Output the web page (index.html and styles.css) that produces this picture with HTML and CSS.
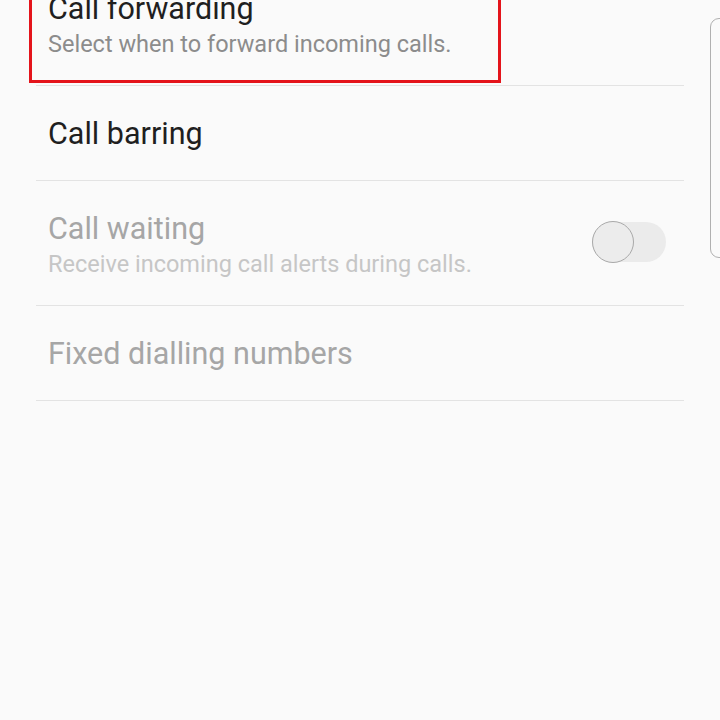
FILE: index.html
```html
<!DOCTYPE html>
<html lang="en">
<head>
  <meta charset="UTF-8" />
  <meta name="viewport" content="width=device-width, initial-scale=1" />
  <title>Call settings</title>
  <link rel="stylesheet" href="styles.css">
</head>
<body>

  <div class="list">
    <div class="row row--sub">
      <div class="text">
        <div class="title">Call forwarding</div>
        <div class="sub">Select when to forward incoming calls.</div>
      </div>
      <div class="highlight"></div>
    </div>

    <div class="row">
      <div class="text">
        <div class="title">Call barring</div>
      </div>
    </div>

    <div class="row row--sub disabled">
      <div class="text">
        <div class="title">Call waiting</div>
        <div class="sub">Receive incoming call alerts during calls.</div>
      </div>
      <div class="switch"><span class="thumb"></span></div>
    </div>

    <div class="row disabled">
      <div class="text">
        <div class="title">Fixed dialling numbers</div>
      </div>
    </div>
  </div>

  <div class="edge-panel"></div>

</body>
</html>
```

FILE: styles.css
```css
* {
  box-sizing: border-box;
}
html, body {
  margin: 0;
  padding: 0;
  height: 100%;
  background: #fafafa;
  font-family: Roboto, 'Noto Sans', sans-serif;
  overflow: hidden;
  position: relative;
}

.list {
  margin-top: -39px;
}

.row {
  position: relative;
  display: flex;
  align-items: center;
  margin: 0 36px;
  padding: 30px 0 28px 12px;
  border-bottom: 1px solid #e3e3e3;
}

.row--sub {
  padding-bottom: 26px;
}

.text {
  flex: 1;
}

.title {
  font-size: 30.5px;
  line-height: 36px;
  color: #1f1f1f;
}

.sub {
  margin-top: 2px;
  font-size: 23.5px;
  line-height: 30px;
  color: #8c8c8c;
}

.disabled .title {
  color: #a6a6a6;
}
.disabled .sub {
  color: #c6c6c6;
}

/* toggle, off + disabled */
.switch {
  position: relative;
  width: 74px;
  height: 40px;
  margin: 0 18px 6px 0;
  border-radius: 20px;
  background: #ebebeb;
  display: flex;
  align-items: center;
}
.thumb {
  width: 42px;
  height: 42px;
  border-radius: 50%;
  background: #ececec;
  border: 1.5px solid #a9a9a9;
}

/* red annotation box */
.highlight {
  position: absolute;
  left: -7px;
  top: -20px;
  width: 472px;
  bottom: 2px;
  border: 3px solid #e4141b;
}

.edge-panel {
  position: absolute;
  top: 18px;
  left: 710px;
  width: 40px;
  height: 240px;
  border: 1.5px solid #b0b0b0;
  border-radius: 9px;
}
```
